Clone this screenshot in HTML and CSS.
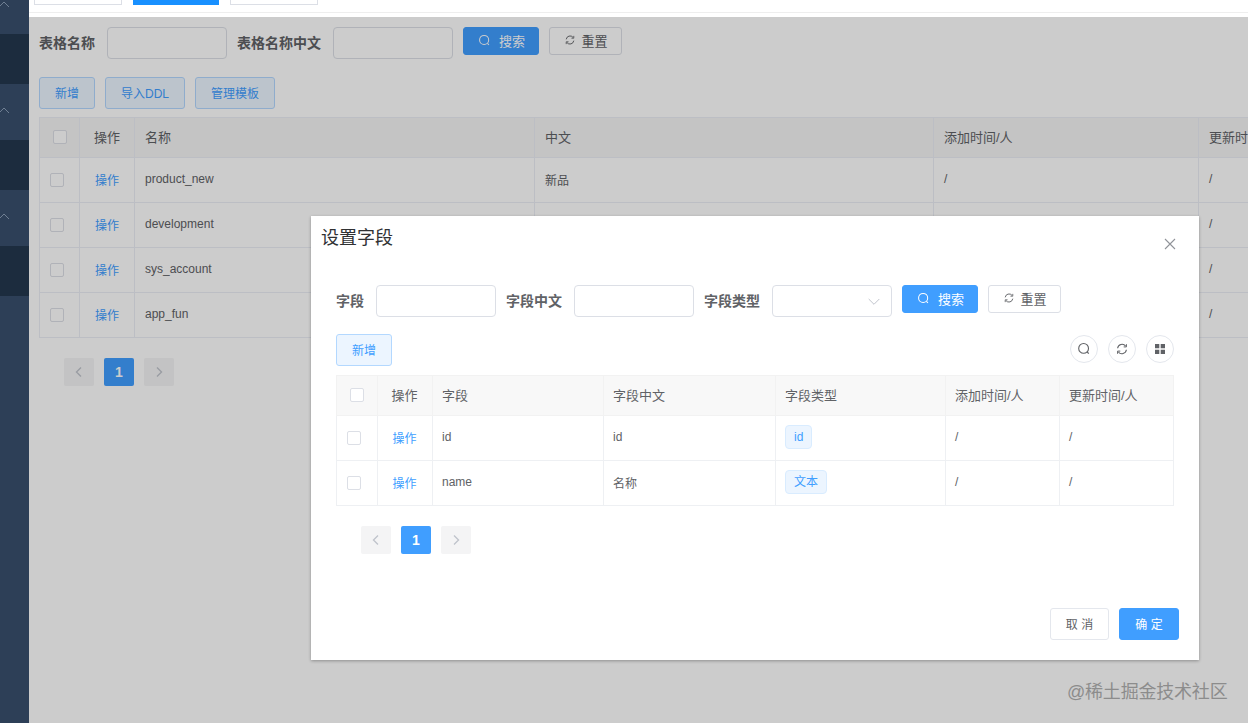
FILE: index.html
```html
<!DOCTYPE html>
<html lang="zh">
<head>
<meta charset="utf-8">
<title>设置字段</title>
<link rel="stylesheet" href="styles.css">
</head>
<body>
<svg class="defs" aria-hidden="true">
  <symbol id="i-search" viewBox="0 0 14 14"><circle cx="6.6" cy="6.4" r="4.9" fill="none" stroke="currentColor" stroke-width="1.1"/><path d="M10.2 10l1.6 1.7" fill="none" stroke="currentColor" stroke-width="1.1"/></symbol>
  <symbol id="i-refresh" viewBox="0 0 14 14"><path d="M2.6 6.2A4.5 4.5 0 0 1 10.6 4M11.4 7.8A4.5 4.5 0 0 1 3.4 10" fill="none" stroke="currentColor" stroke-width="1.1"/><path d="M11.4 2.2v2.7H8.7M2.6 11.8V9.1h2.7" fill="none" stroke="currentColor" stroke-width="1"/></symbol>
  <symbol id="i-left" viewBox="0 0 12 12"><path d="M8 1.5L3.5 6 8 10.500" fill="none" stroke="currentColor" stroke-width="1.4"/></symbol>
  <symbol id="i-right" viewBox="0 0 12 12"><path d="M4 1.500L8.500 6 4 10.500" fill="none" stroke="currentColor" stroke-width="1.4"/></symbol>
  <symbol id="i-up" viewBox="0 0 12 12"><path d="M1 8l5-5 5 5" fill="none" stroke="currentColor" stroke-width="1"/></symbol>
  <symbol id="i-down" viewBox="0 0 12 8"><path d="M.7 1l5.300 5.300L11.300 1" fill="none" stroke="currentColor" stroke-width="1"/></symbol>
  <symbol id="i-close" viewBox="0 0 12 12"><path d="M1 1l10 10M11 1L1 11" fill="none" stroke="currentColor" stroke-width="1.1"/></symbol>
  <symbol id="i-grid" viewBox="0 0 10 10"><path d="M0 0h4.300v4.300H0zM5.700 0H10v4.300H5.700zM0 5.700h4.300V10H0zM5.700 5.700H10V10H5.700z" fill="currentColor"/></symbol>
</svg>

<div class="app">
  <aside class="sidebar">
    <div class="side-group side-group-first"><div class="side-head"><svg class="side-chevron"><use href="#i-up"/></svg></div><div class="side-sub"></div></div>
    <div class="side-group"><div class="side-head"><svg class="side-chevron"><use href="#i-up"/></svg></div><div class="side-sub"></div></div>
    <div class="side-group"><div class="side-head"><svg class="side-chevron"><use href="#i-up"/></svg></div><div class="side-sub"></div></div>
  </aside>

  <div class="main">
    <header class="tabs">
      <span class="tab"></span>
      <span class="tab tab-active"></span>
      <span class="tab"></span>
    </header>

    <section class="page">
      <form class="filter">
        <label class="field-label">表格名称</label>
        <span class="input"></span>
        <label class="field-label">表格名称中文</label>
        <span class="input"></span>
        <button type="button" class="btn btn-primary"><svg class="btn-icon"><use href="#i-search"/></svg>搜索</button>
        <button type="button" class="btn btn-plain"><svg class="btn-icon btn-icon-sm"><use href="#i-refresh"/></svg>重置</button>
      </form>
      <div class="actions">
        <button type="button" class="btn-soft btn-w56">新增</button>
        <button type="button" class="btn-soft btn-w80">导入DDL</button>
        <button type="button" class="btn-soft btn-w80">管理模板</button>
      </div>
      <table class="table table-page">
        <colgroup><col class="c40"><col class="c55"><col class="c400"><col class="c399"><col class="c265"><col class="c205"></colgroup>
        <thead><tr><th class="cell-center"><span class="check"></span></th><th class="cell-center">操作</th><th>名称</th><th>中文</th><th>添加时间/人</th><th>更新时间/人</th></tr></thead>
        <tbody>
          <tr><td class="cell-center"><span class="check check-row"></span></td><td class="cell-center"><a class="link">操作</a></td><td>product_new</td><td>新品</td><td>/</td><td>/</td></tr>
          <tr><td class="cell-center"><span class="check check-row"></span></td><td class="cell-center"><a class="link">操作</a></td><td>development</td><td></td><td>/</td><td>/</td></tr>
          <tr><td class="cell-center"><span class="check check-row"></span></td><td class="cell-center"><a class="link">操作</a></td><td>sys_account</td><td></td><td>/</td><td>/</td></tr>
          <tr><td class="cell-center"><span class="check check-row"></span></td><td class="cell-center"><a class="link">操作</a></td><td>app_fun</td><td></td><td>/</td><td>/</td></tr>
        </tbody>
      </table>
      <nav class="pager pager-page">
        <span class="pager-btn"><svg class="pager-icon"><use href="#i-left"/></svg></span>
        <span class="pager-num">1</span>
        <span class="pager-btn"><svg class="pager-icon"><use href="#i-right"/></svg></span>
      </nav>
    </section>
  </div>
</div>

<div class="mask"></div>

<div class="dialog">
  <header class="dialog-head">
    <h2 class="dialog-title">设置字段</h2>
    <svg class="dialog-close"><use href="#i-close"/></svg>
  </header>
  <div class="dialog-body">
    <form class="filter filter-dialog">
      <label class="field-label">字段</label>
      <span class="input"></span>
      <label class="field-label">字段中文</label>
      <span class="input"></span>
      <label class="field-label">字段类型</label>
      <span class="input input-select"><svg class="select-arrow"><use href="#i-down"/></svg></span>
      <button type="button" class="btn btn-primary"><svg class="btn-icon"><use href="#i-search"/></svg>搜索</button>
      <button type="button" class="btn btn-plain"><svg class="btn-icon btn-icon-sm"><use href="#i-refresh"/></svg>重置</button>
    </form>
    <div class="toolbar">
      <button type="button" class="btn-soft btn-w56">新增</button>
      <div class="tools">
        <span class="tool"><svg class="tool-icon"><use href="#i-search"/></svg></span>
        <span class="tool"><svg class="tool-icon"><use href="#i-refresh"/></svg></span>
        <span class="tool"><svg class="tool-icon tool-grid"><use href="#i-grid"/></svg></span>
      </div>
    </div>
    <table class="table table-dialog">
      <colgroup><col class="d41"><col class="d55"><col class="d171"><col class="d172"><col class="d170"><col class="d114"><col class="d114"></colgroup>
      <thead><tr><th class="cell-center"><span class="check"></span></th><th class="cell-center">操作</th><th>字段</th><th>字段中文</th><th>字段类型</th><th>添加时间/人</th><th>更新时间/人</th></tr></thead>
      <tbody>
        <tr><td class="cell-center"><span class="check check-row"></span></td><td class="cell-center"><a class="link">操作</a></td><td>id</td><td>id</td><td><span class="tag">id</span></td><td>/</td><td>/</td></tr>
        <tr><td class="cell-center"><span class="check check-row"></span></td><td class="cell-center"><a class="link">操作</a></td><td>name</td><td>名称</td><td><span class="tag">文本</span></td><td>/</td><td>/</td></tr>
      </tbody>
    </table>
    <nav class="pager pager-dialog">
      <span class="pager-btn"><svg class="pager-icon"><use href="#i-left"/></svg></span>
      <span class="pager-num">1</span>
      <span class="pager-btn"><svg class="pager-icon"><use href="#i-right"/></svg></span>
    </nav>
  </div>
  <footer class="dialog-foot">
    <button type="button" class="foot-btn foot-cancel">取 消</button>
    <button type="button" class="foot-btn foot-ok">确 定</button>
  </footer>
</div>

<div class="watermark">@稀土掘金技术社区</div>
</body>
</html>
```
FILE: styles.css
```css
* { box-sizing: border-box; }
html, body { margin: 0; height: 100%; overflow: hidden; }
body {
  background: #fff;
  color: #606266;
  font-family: "Liberation Sans", "Noto Sans CJK SC", sans-serif;
  font-size: 12px;
}
.defs { position: absolute; width: 0; height: 0; }
button { font-family: inherit; margin: 0; cursor: pointer; }

.app { display: flex; height: 723px; }

/* sidebar */
.sidebar { width: 29px; flex: none; background: #2d3f57; overflow: hidden; }
.side-group { height: 106px; }
.side-group-first { margin-top: -22px; }
.side-head { height: 56px; position: relative; }
.side-chevron { position: absolute; left: -2px; top: 21px; width: 12px; height: 12px; color: #6f7f93; }
.side-sub { height: 50px; background: #1c2c3e; }

/* main */
.main { flex: 1; min-width: 0; overflow: hidden; }
.tabs { height: 17px; display: flex; gap: 11px; padding-left: 5px; align-items: flex-start; position: relative; }
.tabs::after { content: ""; position: absolute; left: 0; right: 0; top: 12px; height: 1px; background: #eeeeee; }
.tab { width: 88px; height: 5px; background: #fff; border: 1px solid #dcdfe6; border-top: 0; }
.tab-active { width: 86px; background: #1890ff; border-color: #1890ff; }

.page { padding: 10px 0 0 10px; }
.filter { display: flex; align-items: flex-start; height: 32px; }
.field-label { font-size: 14px; font-weight: 700; line-height: 32px; color: #606266; margin-right: 12px; white-space: nowrap; }
.input { width: 120px; height: 32px; flex: none; background: #fff; border: 1px solid #dcdfe6; border-radius: 4px; margin-right: 10px; position: relative; }
.btn { height: 28px; font-size: 13px; border-radius: 3px; display: inline-flex; align-items: center; justify-content: center; padding: 0 0 2px; border: 1px solid; }
.btn-primary { width: 76px; margin-right: 10px; background: #409eff; border-color: #409eff; color: #fff; }
.btn-plain { width: 73px; background: #fff; border-color: #dcdfe6; color: #606266; }
.btn-icon { width: 13px; height: 13px; margin-right: 8px; margin-left: 1px; }
.btn-icon-sm { width: 12px; height: 12px; margin-right: 5px; }

.actions { display: flex; gap: 10px; margin-top: 18px; }
.btn-soft { height: 32px; font-size: 12px; background: #ecf5ff; border: 1px solid #b3d8ff; border-radius: 3px; color: #409eff; padding: 0 0 2px; }
.btn-w56 { width: 56px; }
.btn-w80 { width: 80px; }

/* tables */
.table { border-collapse: collapse; table-layout: fixed; background: #fff; }
.table th, .table td { border: 1px solid #ebeef5; padding: 0 0 2px 10px; text-align: left; overflow: hidden; white-space: nowrap; }
.table th { height: 40px; font-size: 13px; font-weight: 400; background: #f5f5f5; color: #606266; }
.table td { height: 45px; font-size: 12px; color: #606266; }
.table .cell-center { text-align: center; padding: 0 0 1px; }
.table th.cell-center { padding-bottom: 2px; }
.table-page { width: 1364px; margin-top: 8px; }
.c40 { width: 40px; } .c55 { width: 55px; } .c400 { width: 400px; } .c399 { width: 399px; } .c265 { width: 265px; } .c205 { width: 205px; }
.table-dialog { width: 837px; margin-top: 9px; }
.table-dialog th { background: #f8f8f8; border-color: #f2f2f2; padding: 0 0 3px 9px; }
.table-dialog td { border-color: #eef0f3; padding-left: 9px; }
.table-dialog .cell-center, .table-dialog th.cell-center { padding: 0 1px 1px 0; }
.table-dialog th.cell-center { padding-bottom: 3px; }
.d41 { width: 41px; } .d55 { width: 55px; } .d171 { width: 171px; } .d172 { width: 172px; } .d170 { width: 170px; } .d114 { width: 114px; }
.check { display: inline-block; width: 14px; height: 14px; vertical-align: middle; background: #fff; border: 1px solid #dcdfe6; border-radius: 2px; }
.check-row { margin-right: 5px; }
.link { color: #409eff; }
.tag { display: inline-block; height: 24px; line-height: 22px; padding: 0 8px; background: #ecf5ff; border: 1px solid #d9ecff; border-radius: 4px; color: #409eff; font-size: 12px; vertical-align: middle; }

/* pager */
.pager { display: flex; gap: 10px; height: 28px; }
.pager-page { margin: 20px 0 0 25px; }
.pager-dialog { margin: 20px 0 0 25px; }
.pager-btn { width: 30px; height: 28px; background: #f4f4f5; border-radius: 2px; display: flex; align-items: center; justify-content: center; color: #c0c4cc; }
.pager-icon { width: 12px; height: 12px; }
.pager-num { width: 30px; height: 28px; background: #409eff; border-radius: 2px; color: #fff; font-size: 14px; font-weight: 700; display: flex; align-items: center; justify-content: center; }

/* overlay */
.mask { position: absolute; left: 29px; right: 0; top: 17px; bottom: 0; background: rgba(0, 0, 0, .2); }

.dialog {
  position: absolute; left: 311px; top: 216px; width: 888px; height: 444px;
  background: #fff; box-shadow: 0 1px 3px rgba(0, 0, 0, .3);
  display: flex; flex-direction: column;
}
.dialog-head { height: 69px; padding: 10px 10px 0; position: relative; flex: none; }
.dialog-title { margin: 0; font-size: 18px; font-weight: 400; line-height: 24px; color: #303133; }
.dialog-close { position: absolute; top: 22px; right: 23px; width: 12px; height: 12px; color: #909399; }
.dialog-body { padding: 0 25px; flex: 1; }
.filter-dialog { height: 32px; }
.input-select { display: block; }
.select-arrow { position: absolute; right: 11px; top: 12px; width: 12px; height: 8px; color: #c0c4cc; }
.toolbar { display: flex; justify-content: space-between; align-items: flex-start; margin-top: 17px; height: 32px; }
.tools { display: flex; gap: 10px; margin-top: 1px; }
.tool { width: 28px; height: 28px; border: 1px solid #e4e7ed; border-radius: 50%; display: flex; align-items: center; justify-content: center; color: #606266; }
.tool-icon { width: 14px; height: 14px; }
.tool-grid { width: 10px; height: 10px; }
.dialog-foot { display: flex; justify-content: flex-end; gap: 10px; padding: 0 20px 20px; }
.foot-btn { height: 32px; font-size: 12px; border-radius: 3px; border: 1px solid; padding: 0 0 2px; }
.foot-cancel { width: 59px; background: #fff; border-color: #e4e7ed; color: #606266; }
.foot-ok { width: 60px; background: #409eff; border-color: #409eff; color: #fff; }

.watermark { position: absolute; left: 1067px; top: 680px; font-size: 18px; line-height: 24px; letter-spacing: -.2px; color: #8c8c8c; }
```
